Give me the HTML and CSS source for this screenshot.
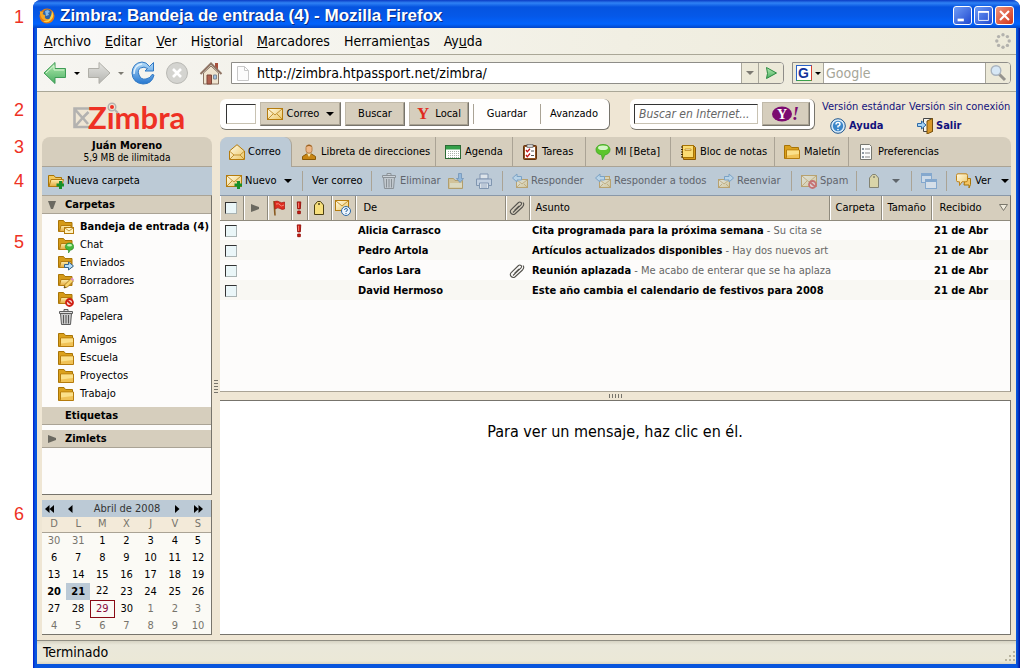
FILE: index.html
```html
<!DOCTYPE html>
<html lang="es">
<head>
<meta charset="utf-8">
<title>Zimbra: Bandeja de entrada (4)</title>
<link rel="stylesheet" href="styles.css">
</head>
<body>
<svg class="sprite" aria-hidden="true">
  <defs>
    <linearGradient id="gold" x1="0" y1="0" x2="0" y2="1"><stop offset="0" stop-color="#fdeeb0"/><stop offset="1" stop-color="#e3a93c"/></linearGradient>
    <linearGradient id="paper" x1="0" y1="0" x2="1" y2="1"><stop offset="0" stop-color="#fffbe8"/><stop offset="1" stop-color="#ecc766"/></linearGradient>
    <linearGradient id="green" x1="0" y1="0" x2="0" y2="1"><stop offset="0" stop-color="#b4ecb0"/><stop offset="1" stop-color="#4aae62"/></linearGradient>
    <linearGradient id="blue" x1="0" y1="0" x2="0" y2="1"><stop offset="0" stop-color="#b5dcf8"/><stop offset="1" stop-color="#2577d0"/></linearGradient>
    <linearGradient id="grey" x1="0" y1="0" x2="0" y2="1"><stop offset="0" stop-color="#e4e4e0"/><stop offset="1" stop-color="#b4b4b0"/></linearGradient>
  </defs>
  <symbol id="mail" viewBox="0 0 16 16"><rect x=".5" y="2.5" width="15" height="11" fill="url(#paper)" stroke="#b57b0d"/><path d="M1 3l7 6 7-6M1 13l5-5M15 13l-5-5" fill="none" stroke="#c39332"/></symbol>
  <symbol id="openmail" viewBox="0 0 16 16"><path d="M.5 7L8 .7 15.500 7v8.500H.5z" fill="url(#paper)" stroke="#b57b0d"/><path d="M1 7.500l4 3.500h6l4-3.500M1 15l4-4M15 15l-4-4" fill="none" stroke="#c39332"/></symbol>
  <symbol id="plus" viewBox="0 0 16 16"><path d="M11 8h3v2.500h2v3h-2V16h-3v-2.500H8.500v-3H11z" fill="#16902a"/></symbol>
  <symbol id="newmail" viewBox="0 0 16 16"><use href="#mail"/><use href="#plus"/></symbol>
  <symbol id="folder" viewBox="0 0 16 16"><path d="M.5 14.500v-13h5.500l1.500 2h7v11z" fill="#dba11d" stroke="#a87406"/><path d="M2.500 13.500V6h13v8.500H1z" fill="#f0c256" stroke="#b57b0d"/><path d="M3 6.500h12v3.500L3 11.500z" fill="#fbe08a"/></symbol>
  <symbol id="newfolder" viewBox="0 0 16 16"><path d="M.5 13.500v-11h5.500l1.500 2h6v9z" fill="#f3c95c" stroke="#a87406"/><path d="M1 13.500L3 6.500h12.500l-2 7z" fill="url(#gold)" stroke="#b57b0d"/><use href="#plus"/></symbol>
  <symbol id="minifolder" viewBox="0 0 16 16"><path d="M.5 12.500V1.500h5l1.500 2h7v9z" fill="#d59a18" stroke="#a87406"/><path d="M1.500 12.500l1.500-6h10v6z" fill="url(#gold)" stroke="#b57b0d"/></symbol>
  <symbol id="f-in" viewBox="0 0 16 16"><use href="#minifolder"/><rect x="6.500" y="8.500" width="9" height="6" fill="#fff3c4" stroke="#b57b0d"/><path d="M7 9l4 3 4-3" fill="none" stroke="#c39332"/></symbol>
  <symbol id="f-chat" viewBox="0 0 16 16"><use href="#minifolder"/><path d="M11.500 6c2.500 0 4.300 1.500 4.300 3.700 0 2-1.500 3.200-3.300 3.400L10.500 16v-3c-2-.3-3.200-1.500-3.200-3.300C7.300 7.500 9 6 11.500 6z" fill="#45b83c" stroke="#26882a" stroke-width=".6"/><ellipse cx="11.500" cy="8.300" rx="2.500" ry="1.200" fill="#c9f3b8"/></symbol>
  <symbol id="f-sent" viewBox="0 0 16 16"><use href="#minifolder"/><path d="M6.500 9.500h4V7l5 4-5 4v-2.500h-4z" fill="#b5dcf8" stroke="#35648d"/></symbol>
  <symbol id="f-draft" viewBox="0 0 16 16"><use href="#minifolder"/><path d="M6 15l1-3.500 6-6 2.500 2.500-6 6z" fill="#f9d36b" stroke="#9a6d13" stroke-width=".8"/><path d="M12.500 6l1.500-1.500 2 2L14.800 8z" fill="#dc8fc4"/><path d="M6 15l.6-2 1.400 1.400z" fill="#4a3a10"/></symbol>
  <symbol id="no" viewBox="0 0 16 16"><circle cx="11.500" cy="11.500" r="3.500" fill="#f6d2cc" stroke="#cf1d12" stroke-width="1.800"/><path d="M9.200 9.500l4.800 4" stroke="#cf1d12" stroke-width="1.700"/></symbol>
  <symbol id="f-spam" viewBox="0 0 16 16"><use href="#minifolder"/><use href="#no"/></symbol>
  <symbol id="spam" viewBox="0 0 16 16"><use href="#mail"/><use href="#no"/></symbol>
  <symbol id="trash" viewBox="0 0 16 16"><path d="M2.500 4.500h11l-1 11h-9z" fill="#c9c9c9" stroke="#5c5c5c"/><path d="M5.500 6v8.500M8 6v8.500M10.500 6v8.500" stroke="#555"/><path d="M1.500 2.500h13v2h-13zM6 2V.5h4V2" fill="#dedede" stroke="#5c5c5c"/></symbol>
  <symbol id="person" viewBox="0 0 16 16"><path d="M1.500 15.500v-3l4-2.500h5l4 2.500v3z" fill="#c98612" stroke="#8a5a08"/><path d="M6 9.500h4L8 13z" fill="#fbe9b4"/><rect x="5" y="1" width="6" height="8" rx="2.500" fill="#efb887" stroke="#b98048"/><path d="M5.500 3q2.500-2 5 0V2q-2.500-2.500-5 0z" fill="#9a6020"/></symbol>
  <symbol id="agenda" viewBox="0 0 16 16"><rect x=".5" y="1.500" width="15" height="13" fill="#fff" stroke="#2c6a35"/><path d="M1 2h14v3.500H1z" fill="#35a04a"/><path d="M3 7.500h11M3 9.500h11M3 11.500h11M3 13.500h11" stroke="#a9b3a9" stroke-dasharray="1 1"/></symbol>
  <symbol id="tasks" viewBox="0 0 16 16"><rect x="1.500" y="1.500" width="13" height="14" rx="1" fill="#91501d" stroke="#5e3210"/><path d="M3 3h10v11H3z" fill="#fff"/><rect x="5" y=".5" width="6" height="3" fill="#d0d0d0" stroke="#666" stroke-width=".7"/><path d="M4 6l1.300 1.800L8 4.800M4 11l1.300 1.800L8 9.500" fill="none" stroke="#c41414" stroke-width="1.300"/><path d="M9 7h3M9 11.500h3" stroke="#555"/></symbol>
  <symbol id="bubble" viewBox="0 0 16 16"><path d="M8 .5c4 0 7 2 7 5.200 0 3-2.500 4.800-5 5.100L7.500 15.800 6.500 10.800C3 10.300 1 8.500 1 5.700 1 2.500 4 .5 8 .5z" fill="#5cc52c" stroke="#3da424" stroke-width=".8"/><ellipse cx="8" cy="3.800" rx="5" ry="2.300" fill="#d5f5c8"/></symbol>
  <symbol id="notes" viewBox="0 0 16 16"><path d="M2.500 1.500h11l2 2v12h-12z" fill="#d59a18" stroke="#8a5a08"/><rect x="2.500" y="1.500" width="11" height="12" fill="#fbdc72" stroke="#a87406"/><path d="M5 5h6v1.500H5z" fill="#fff6cf" stroke="#b57b0d" stroke-width=".7"/><path d="M1 3h2M1 5.500h2M1 8h2M1 10.500h2M1 13h2" stroke="#3b2a08"/></symbol>
  <symbol id="prefs" viewBox="0 0 16 16"><path d="M2.500.5h9l2 2v13h-11z" fill="#fcfcfa" stroke="#77776f"/><path d="M7 5h5M7 9h5M7 13h5" stroke="#888"/><path d="M4 4h2v2H4zM4 8h2v2H4zM4 12h2v2H4z" fill="#8d98a2"/></symbol>
  <symbol id="move" viewBox="0 0 16 16"><path d="M.5 15.500v-10h5l1.500 2h7.500v8z" fill="#e6bd62" stroke="#a87406"/><path d="M2 10h12v4.500H2z" fill="#fbe9ae"/><path d="M10.500.5h3v5H15.500L12 9.500 8.500 5.500h2z" fill="#69a8e2" stroke="#2a609a" stroke-width=".8"/></symbol>
  <symbol id="print" viewBox="0 0 16 16"><path d="M4 1h8v5H4z" fill="#fff" stroke="#46638c"/><path d="M.5 6h15v6.500H.5z" fill="#c8d6ea" stroke="#46638c"/><path d="M3.500 10h9v5.500h-9z" fill="#fff" stroke="#46638c"/><path d="M5 12h6M5 14h6" stroke="#7a92b4"/></symbol>
  <symbol id="reply" viewBox="0 0 16 16"><rect x="4.500" y="6.500" width="11" height="8" fill="url(#paper)" stroke="#b57b0d"/><path d="M5 7l5 4 5-4M5 14l3-3M15 14l-3-3" fill="none" stroke="#c39332"/><path d="M.5 5L5 1v2.500h4.500v3.500H5V9z" fill="#b5dcf8" stroke="#3c7db5"/></symbol>
  <symbol id="replyall" viewBox="0 0 16 16"><rect x="5.500" y="3.500" width="9" height="7" fill="#f4dc96" stroke="#b57b0d"/><use href="#reply"/></symbol>
  <symbol id="forward" viewBox="0 0 16 16"><rect x=".5" y="6.500" width="11" height="8" fill="url(#paper)" stroke="#b57b0d"/><path d="M1 7l5 4 5-4M1 14l3-3M11 14l-3-3" fill="none" stroke="#c39332"/><path d="M15.500 5L11 1v2.500H6.500v3.500H11V9z" fill="#b5dcf8" stroke="#3c7db5"/></symbol>
  <symbol id="tag" viewBox="0 0 16 16"><path d="M3.500 14.500V5l3-3.500h3l3 3.500v9.500z" fill="#f7df7b" stroke="#4c3f10"/><circle cx="8" cy="4" r="1" fill="#4c3f10"/></symbol>
  <symbol id="windows" viewBox="0 0 16 16"><rect x=".5" y=".5" width="10" height="9" fill="#dcebfa" stroke="#4d87c8"/><path d="M1 2h9" stroke="#4d87c8" stroke-width="2"/><rect x="4.500" y="6.500" width="11" height="9" fill="#eef5fc" stroke="#4d87c8"/><path d="M5 8h10" stroke="#4d87c8" stroke-width="2"/></symbol>
  <symbol id="view" viewBox="0 0 16 16"><path d="M9 5.500h5.500v6L13 15v-3H8z" fill="#f4c563" stroke="#a87406"/><path d="M2 .8h8q1.500 0 1.500 1.500v5q0 1.500-1.500 1.500H6L3.500 12.500V8.800H2Q.5 8.800.5 7.300v-5Q.5.8 2 .8z" fill="url(#paper)" stroke="#c0841a"/></symbol>
  <symbol id="flag" viewBox="0 0 16 16"><path d="M3 1l1 14.500" stroke="#8a5a20" stroke-width="1.600"/><path d="M3.500 1.500q3-1 5 .5t5 0v7q-2.500 1-4.500-.5T4 9z" fill="#df2d20" stroke="#a81410" stroke-width=".7"/><path d="M5 4q3-1 4 1t4 0" stroke="#f58a7c" fill="none"/></symbol>
  <symbol id="urgent" viewBox="0 0 6 16"><path d="M1 1h4L4.500 9h-3zM1.500 11.500h3v3h-3z" fill="#d52015" stroke="#8f0d08"/><path d="M2.500 2v6" stroke="#f58a7c"/></symbol>
  <symbol id="status" viewBox="0 0 16 16"><rect x=".5" y=".5" width="13" height="10" fill="url(#paper)" stroke="#b57b0d"/><path d="M1 1l6 5 6-5" fill="none" stroke="#c39332"/><circle cx="11" cy="11" r="4.500" fill="#eef5fc" stroke="#2d69a5"/><path d="M9.500 10q0-1.500 1.500-1.500t1.500 1.300-1.500 1.400v.8M11 13v1" fill="none" stroke="#2d69a5"/></symbol>
  <symbol id="clip" viewBox="0 0 16 16"><path d="M4 12.500L12 5q1.200-1.500 0-2.500t-2.500 0L2.200 9.500q-1.800 2.200 0 4t4 .2L13.500 7q2.200-2.500.5-4.500M5.500 10.500l4.500-4.500" fill="none" stroke="#55534e" stroke-width="1.100"/></symbol>
  <symbol id="help" viewBox="0 0 16 16"><circle cx="8" cy="8" r="7.300" fill="#d9ebf9" stroke="#1d548c"/><circle cx="8" cy="8" r="5.200" fill="#3b86c9"/><path d="M6 6.500q0-2 2-2t2 1.700-2 2v1.300M8 11v1.300" fill="none" stroke="#fff" stroke-width="1.500"/></symbol>
  <symbol id="exit" viewBox="0 0 16 16"><path d="M6.500.5h9v13h-9z" fill="#f4f4f0" stroke="#444"/><path d="M15.500.5v13L10 16V3z" fill="#d9982a" stroke="#76500d"/><path d="M.5 5.500h4V3l4.500 4-4.500 4V8.500h-4z" fill="#a8d4f5" stroke="#2d69a5"/></symbol>
  <symbol id="firefox" viewBox="0 0 16 16"><circle cx="8" cy="8" r="7.500" fill="#e47a12"/><circle cx="8.500" cy="6.500" r="5" fill="#2f62a8"/><path d="M6 3l3-1 2 2-2 1 1 2-3 1z" fill="#84b9e8"/><path d="M.8 3Q2 4 4.500 4l-1 2 3 1.500Q5 9 6.500 10.500t5 .2Q9 14 5 12T.8 3z" fill="#f7a823"/><path d="M13 3q3 5-1 9t-8 1q8 1 9-10z" fill="#fbd34a"/></symbol>
  <symbol id="throbber" viewBox="0 0 16 16"><g fill="#b3b2ad"><circle cx="8" cy="1.800" r="1.700"/><circle cx="12.400" cy="3.600" r="1.700"/><circle cx="14.200" cy="8" r="1.700"/><circle cx="12.400" cy="12.400" r="1.700"/><circle cx="8" cy="14.200" r="1.700"/><circle cx="3.600" cy="12.400" r="1.700"/><circle cx="1.800" cy="8" r="1.700"/><circle cx="3.600" cy="3.600" r="1.700"/></g></symbol>
</svg>

<ol class="callouts"><li>1</li><li>2</li><li>3</li><li>4</li><li>5</li><li>6</li></ol>

<div class="window">
  <header class="titlebar">
    <svg class="icon"><use href="#firefox"/></svg>
    <h1>Zimbra: Bandeja de entrada (4) - Mozilla Firefox</h1>
    <button class="winbtn" aria-label="Minimizar"><svg viewBox="0 0 19 19"><path d="M4 13h7v3H4z" fill="#fff"/></svg></button>
    <button class="winbtn" aria-label="Maximizar"><svg viewBox="0 0 19 19"><path d="M4 5h11v10H4z" fill="none" stroke="#fff"/><path d="M3.500 4.500h12v2h-12z" fill="#fff"/></svg></button>
    <button class="winbtn close" aria-label="Cerrar"><svg viewBox="0 0 19 19"><path d="M4.500 4.500l10 10M14.500 4.500l-10 10" stroke="#fff" stroke-width="2.400"/></svg></button>
  </header>

  <nav class="menubar">
    <a href="#"><u>A</u>rchivo</a><a href="#"><u>E</u>ditar</a><a href="#"><u>V</u>er</a><a href="#">Hi<u>s</u>torial</a><a href="#"><u>M</u>arcadores</a><a href="#">Herramien<u>t</u>as</a><a href="#">Ay<u>u</u>da</a>
    <svg class="icon throbber"><use href="#throbber"/></svg>
  </nav>

  <div class="navbar">
    <button aria-label="Atrás"><svg width="24" height="24" viewBox="0 0 24 24"><path d="M1 12L12 1.500V7.500h10.500v9H12v6z" fill="url(#green)" stroke="#3f9c56"/><path d="M3 12l8-7.500V9h10" fill="none" stroke="#d8f5d2"/></svg></button>
    <span class="caret small"></span>
    <button aria-label="Adelante"><svg width="24" height="24" viewBox="0 0 24 24"><path d="M23 12L12 1.500V7.500H1.500v9H12v6z" fill="url(#grey)" stroke="#b0afa8"/></svg></button>
    <span class="caret small faded"></span>
    <button aria-label="Recargar"><svg width="24" height="24" viewBox="0 0 24 24"><path d="M18.500 5.500L22.500 1.500V10h-8.500l2.500-2.500Q13 5 9.500 7T8 14t7 4 6-4.500l2 .5Q21 23 12 23 1.500 22 1 12 1.500 2 11 1q4.500 0 7.500 4.500z" fill="url(#blue)" stroke="#2f78c4"/><path d="M3 13Q3 4 11 3" fill="none" stroke="#dff0fd" stroke-width="1.500"/></svg></button>
    <button class="apart" aria-label="Detener"><svg width="24" height="24" viewBox="0 0 24 24"><circle cx="12" cy="12" r="10.500" fill="#d4d4d0" stroke="#b9b9b4"/><path d="M8 8l8 8M16 8l-8 8" stroke="#fff" stroke-width="2.600"/></svg></button>
    <button class="apart" aria-label="Inicio"><svg width="24" height="24" viewBox="0 0 24 24"><path d="M4.500 12v11h15V12L12 5z" fill="#efe4cf" stroke="#8a7462"/><path d="M16 2h3v6h-3z" fill="#a84f3b"/><path d="M1.500 13L12 2.500 22.500 13" fill="none" stroke="#8f7464" stroke-width="2"/><path d="M8 14h4.500v9H8z" fill="#b0604e" stroke="#7c4537"/><path d="M14.500 14h3v4h-3z" fill="#9fc0de" stroke="#7c8894"/></svg></button>
    <div class="address">
      <svg width="12" height="15" viewBox="0 0 12 15"><path d="M.5.5h7l4 4v10H.5zM7.500.5v4h4" fill="#fcfcfc" stroke="#c8c8c8"/></svg>
      <input type="text" aria-label="Dirección" value="http://zimbra.htpassport.net/zimbra/">
      <button class="drop" aria-label="Historial de direcciones"><span class="caret grey"></span></button>
      <button class="go" aria-label="Ir"><svg width="14" height="14" viewBox="0 0 14 14"><path d="M2.500 1.500L12.500 7l-10 5.500 1-5z" fill="url(#green)" stroke="#2a8a40"/></svg></button>
    </div>
    <div class="google">
      <button class="engine" aria-label="Motor de búsqueda"><span class="glogo">G</span><span class="caret small"></span></button>
      <input type="text" aria-label="Buscar con Google" placeholder="Google">
      <button class="go" aria-label="Buscar"><svg width="18" height="18" viewBox="0 0 18 18"><path d="M10 10l6 6" stroke="#96948f" stroke-width="3"/><circle cx="7" cy="6.500" r="4.800" fill="#d7e8f6" stroke="#a9b4bf" stroke-width="1.400"/></svg></button>
    </div>
  </div>

  <main class="app">
    <aside class="side">
      <div class="logo">
        <svg width="120" height="36" viewBox="0 0 120 36" role="img" aria-label="Zimbra">
          <path d="M19 9.500H2.500v18.500H18M3.500 11l7 8-7 8M10.500 19l6-6M10 18l6 7" fill="none" stroke="#b3b2b0" stroke-width="2.600"/>
          <text x="16" y="30" class="logotext">Zimbra</text>
          <circle cx="40" cy="8" r="3.800" fill="#efe6d4" stroke="#b3b2b0" stroke-width="1.500"/><path d="M43 11l3 3" stroke="#b3b2b0" stroke-width="2"/><circle cx="40" cy="8" r="2" fill="#ee3124"/>
        </svg>
      </div>
      <div class="user"><b>Juán Moreno</b><span>5,9 MB de ilimitada</span></div>
      <button class="newfolder"><svg class="icon"><use href="#newfolder"/></svg>Nueva carpeta</button>
      <div class="tree">
        <h2><svg class="tw" viewBox="0 0 8 8"><path d="M0 0h8L5 8H3z" fill="#6b6960"/></svg>Carpetas</h2>
        <ul>
          <li class="unread"><svg class="icon"><use href="#f-in"/></svg>Bandeja de entrada (4)</li>
          <li><svg class="icon"><use href="#f-chat"/></svg>Chat</li>
          <li><svg class="icon"><use href="#f-sent"/></svg>Enviados</li>
          <li><svg class="icon"><use href="#f-draft"/></svg>Borradores</li>
          <li><svg class="icon"><use href="#f-spam"/></svg>Spam</li>
          <li><svg class="icon"><use href="#trash"/></svg>Papelera</li>
        </ul>
        <ul class="own">
          <li><svg class="icon"><use href="#folder"/></svg>Amigos</li>
          <li><svg class="icon"><use href="#folder"/></svg>Escuela</li>
          <li><svg class="icon"><use href="#folder"/></svg>Proyectos</li>
          <li><svg class="icon"><use href="#folder"/></svg>Trabajo</li>
        </ul>
        <h2>Etiquetas</h2>
        <h2 class="zimlets"><svg class="tw" viewBox="0 0 8 8"><path d="M0 0l8 3v2L0 8z" fill="#6b6960"/></svg>Zimlets</h2>
      </div>
      <div class="calendar">
        <div class="month">
          <button aria-label="Año anterior"><svg width="9" height="8" viewBox="0 0 9 8"><path d="M4.500 0v8L0 4zM9 0v8L4.500 4z"/></svg></button>
          <button aria-label="Mes anterior"><svg width="5" height="8" viewBox="0 0 5 8"><path d="M4.500 0v8L0 4z"/></svg></button>
          <span>Abril de 2008</span>
          <button aria-label="Mes siguiente"><svg width="5" height="8" viewBox="0 0 5 8"><path d="M0 0v8l4.500-4z"/></svg></button>
          <button aria-label="Año siguiente"><svg width="9" height="8" viewBox="0 0 9 8"><path d="M0 0v8l4.500-4zM4.500 0v8L9 4z"/></svg></button>
        </div>
        <table>
          <thead><tr><th>D</th><th>L</th><th>M</th><th>X</th><th>J</th><th>V</th><th>S</th></tr></thead>
          <tbody>
            <tr><td class="off">30</td><td class="off">31</td><td>1</td><td>2</td><td>3</td><td>4</td><td>5</td></tr>
            <tr><td>6</td><td>7</td><td>8</td><td>9</td><td>10</td><td>11</td><td>12</td></tr>
            <tr><td>13</td><td>14</td><td>15</td><td>16</td><td>17</td><td>18</td><td>19</td></tr>
            <tr><td class="busy">20</td><td class="busy picked">21</td><td>22</td><td>23</td><td>24</td><td>25</td><td>26</td></tr>
            <tr><td>27</td><td>28</td><td class="today">29</td><td>30</td><td class="off">1</td><td class="off">2</td><td class="off">3</td></tr>
            <tr><td class="off">4</td><td class="off">5</td><td class="off">6</td><td class="off">7</td><td class="off">8</td><td class="off">9</td><td class="off">10</td></tr>
          </tbody>
        </table>
      </div>
    </aside>

    <div class="sash" aria-hidden="true"><i></i><i></i><i></i><i></i><i></i></div>

    <section class="content">
      <div class="top">
        <form class="search">
          <input class="query" type="text" aria-label="Buscar">
          <button type="button" class="raised kind"><svg class="icon"><use href="#mail"/></svg>Correo<span class="caret"></span></button>
          <button type="button" class="raised find">Buscar</button>
          <button type="button" class="raised local"><span class="ylogo">Y</span>Local</button>
          <span class="sep"></span>
          <button type="button" class="flat">Guardar</button>
          <span class="sep"></span>
          <button type="button" class="flat">Avanzado</button>
        </form>
        <form class="websearch">
          <input type="text" aria-label="Buscar en Internet" placeholder="Buscar en Internet...">
          <button type="button" class="raised yahoo" aria-label="Yahoo"><svg width="28" height="18" viewBox="0 0 28 18"><ellipse cx="10" cy="9" rx="10" ry="7.500" fill="#7b0a70"/><text x="5" y="14" class="yy">Y</text><text x="20" y="15" class="bang">!</text></svg></button>
        </form>
        <div class="links">
          <a href="#">Versión estándar</a><a href="#">Versión sin conexión</a>
          <a href="#" class="strong"><svg class="icon"><use href="#help"/></svg>Ayuda</a><a href="#" class="strong"><svg class="icon"><use href="#exit"/></svg>Salir</a>
        </div>
      </div>

      <nav class="tabs">
        <button class="current"><svg class="icon"><use href="#openmail"/></svg>Correo</button>
        <button><svg class="icon"><use href="#person"/></svg>Libreta de direcciones</button>
        <button><svg class="icon"><use href="#agenda"/></svg>Agenda</button>
        <button><svg class="icon"><use href="#tasks"/></svg>Tareas</button>
        <button><svg class="icon"><use href="#bubble"/></svg>MI [Beta]</button>
        <button><svg class="icon"><use href="#notes"/></svg>Bloc de notas</button>
        <button><svg class="icon"><use href="#folder"/></svg>Maletín</button>
        <button><svg class="icon"><use href="#prefs"/></svg>Preferencias</button>
      </nav>

      <div class="toolbar">
        <button><svg class="icon"><use href="#newmail"/></svg>Nuevo<span class="caret"></span></button>
        <button class="ruled">Ver correo</button>
        <button class="ruled" disabled><svg class="icon"><use href="#trash"/></svg>Eliminar</button>
        <button disabled aria-label="Mover"><svg class="icon"><use href="#move"/></svg></button>
        <button disabled aria-label="Imprimir"><svg class="icon"><use href="#print"/></svg></button>
        <button class="ruled" disabled><svg class="icon"><use href="#reply"/></svg>Responder</button>
        <button disabled><svg class="icon"><use href="#replyall"/></svg>Responder a todos</button>
        <button disabled><svg class="icon"><use href="#forward"/></svg>Reenviar</button>
        <button class="ruled" disabled><svg class="icon"><use href="#spam"/></svg>Spam</button>
        <button class="ruled" disabled aria-label="Etiquetar"><svg class="icon"><use href="#tag"/></svg><span class="caret wide"></span></button>
        <button class="ruled" disabled aria-label="Separar"><svg class="icon"><use href="#windows"/></svg></button>
        <button class="ruled"><svg class="icon"><use href="#view"/></svg>Ver<span class="caret wide"></span></button>
      </div>

      <div class="list">
        <table>
          <colgroup><col class="cbox"><col class="c24"><col class="c24"><col class="c16"><col class="c24"><col class="c24"><col class="cfrom"><col class="c24"><col><col class="cfolder"><col class="csize"><col class="cdate"></colgroup>
          <thead><tr>
            <th><input type="checkbox" aria-label="Seleccionar todo"></th>
            <th><svg class="tw" viewBox="0 0 8 8"><path d="M0 0l8 3v2L0 8z" fill="#6b6960"/></svg></th>
            <th><svg class="icon"><use href="#flag"/></svg></th>
            <th><svg class="bangicon"><use href="#urgent"/></svg></th>
            <th><svg class="icon"><use href="#tag"/></svg></th>
            <th><svg class="icon"><use href="#status"/></svg></th>
            <th class="text from">De</th>
            <th><svg class="icon"><use href="#clip"/></svg></th>
            <th class="text">Asunto</th>
            <th class="text">Carpeta</th>
            <th class="text">Tamaño</th>
            <th class="text date">Recibido<svg width="9" height="7" viewBox="0 0 9 7"><path d="M.5.500h8L4.500 6.500z" fill="#f0ebdd" stroke="#7a776c"/></svg></th>
          </tr></thead>
          <tbody>
            <tr><td><input type="checkbox" aria-label="Alicia Carrasco"></td><td></td><td></td><td><svg class="bangicon"><use href="#urgent"/></svg></td><td></td><td></td><td class="from">Alicia Carrasco</td><td></td><td class="subject">Cita programada para la próxima semana<span> - Su cita se</span></td><td></td><td></td><td class="date">21 de Abr</td></tr>
            <tr><td><input type="checkbox" aria-label="Pedro Artola"></td><td></td><td></td><td></td><td></td><td></td><td class="from">Pedro Artola</td><td></td><td class="subject">Artículos actualizados disponibles<span> - Hay dos nuevos art</span></td><td></td><td></td><td class="date">21 de Abr</td></tr>
            <tr><td><input type="checkbox" aria-label="Carlos Lara"></td><td></td><td></td><td></td><td></td><td></td><td class="from">Carlos Lara</td><td><svg class="icon"><use href="#clip"/></svg></td><td class="subject">Reunión aplazada<span> - Me acabo de enterar que se ha aplaza</span></td><td></td><td></td><td class="date">21 de Abr</td></tr>
            <tr><td><input type="checkbox" aria-label="David Hermoso"></td><td></td><td></td><td></td><td></td><td></td><td class="from">David Hermoso</td><td></td><td class="subject">Este año cambia el calendario de festivos para 2008</td><td></td><td></td><td class="date">21 de Abr</td></tr>
          </tbody>
        </table>
      </div>
      <div class="sash flat-sash" aria-hidden="true"><i></i><i></i><i></i><i></i><i></i></div>
      <article class="preview">Para ver un mensaje, haz clic en él.</article>
    </section>
  </main>

  <footer class="status"><span>Terminado</span><svg width="12" height="12" viewBox="0 0 12 12"><path d="M9 1h2v2H9zM5 5h2v2H5zM9 5h2v2H9zM1 9h2v2H1zM5 9h2v2H5zM9 9h2v2H9z" fill="#b8b49f"/></svg></footer>
</div>
</body>
</html>
```
FILE: styles.css
```css
* { box-sizing: border-box; }
body {
  margin: 0;
  min-height: 100vh;
  display: grid;
  grid-template-columns: 33px 1fr;
  background: #fff;
  color: #000;
  font: 11px/14px "DejaVu Sans Condensed", "DejaVu Sans", sans-serif;
}
button, input { font: inherit; color: inherit; }
button { display: flex; align-items: center; border: 0; padding: 0; background: none; white-space: nowrap; }
ul, ol, h1, h2 { margin: 0; padding: 0; list-style: none; font-size: inherit; }
a { color: inherit; text-decoration: none; }
svg { display: block; flex: none; }
.sprite { position: absolute; width: 0; height: 0; }
.icon { width: 16px; height: 16px; }
.tw { width: 8px; height: 8px; }
.caret { border: 4px solid transparent; border-top-color: #000; border-bottom: 0; }
.caret.small { border-width: 3px 3px 0; }
.caret.faded, .caret.grey { border-top-color: #7c7a72; }

.callouts {
  display: grid;
  grid-template-rows: 93px 37px 34px 61px 272px auto;
  padding: 7px 0 0 14px;
  font: 18px/20px "Liberation Sans", sans-serif;
  color: #ee3124;
}

.window {
  display: flex;
  flex-direction: column;
  min-width: 0;
  padding: 0 4px 4px;
  border-radius: 8px 8px 0 0;
  background: linear-gradient(90deg, #0019cf, #0855dd 2px, #0855dd calc(100% - 3px), #00109c);
}
.titlebar {
  display: flex;
  align-items: center;
  height: 28px;
  margin: 0 -4px;
  padding: 3px 6px 0;
  border-radius: 8px 8px 0 0;
  background: linear-gradient(#0a3bc4, #2f82f5 3px, #0554e0 7px, #0558e8 16px, #0263fc 24px, #0245c8);
}
.titlebar h1 {
  flex: 1;
  padding-left: 5px;
  font: bold 17px/20px "Liberation Sans", sans-serif;
  color: #fff;
  text-shadow: 1px 1px #0a2a80;
}
.winbtn { width: 19px; height: 19px; margin-left: 2px; border: 1px solid #fff; border-radius: 3px; background: linear-gradient(135deg, #6f9cf5, #1f49d0); }
.winbtn.close { background: linear-gradient(135deg, #f0947a, #d0341a); }

.menubar {
  display: flex;
  align-items: center;
  gap: 14px;
  height: 27px;
  padding: 0 5px 0 7px;
  border-bottom: 1px solid #aaa797;
  background: linear-gradient(90deg, #fafaf9, #f1efe3 60%, #edead9);
  font-size: 14px;
}
.throbber { margin-left: auto; }

.navbar {
  display: flex;
  align-items: center;
  gap: 6px;
  height: 37px;
  padding: 0 5px 0 6px;
  border-bottom: 1px solid #aaa797;
  background: linear-gradient(90deg, #f6f5f1, #efede1 60%, #edead9);
}
.navbar button { flex: none; }
.navbar button + .caret { margin: 0 1px; }
.navbar .apart { margin-left: 4px; }
.navbar input { flex: 1; min-width: 0; height: 20px; padding: 0 8px; border: 0; background: none; font-size: 14px; outline: 0; }
.address, .google { display: flex; align-items: center; height: 22px; border: 1px solid #8e8d88; background: #fff; overflow: hidden; }
.address { flex: 1; min-width: 0; margin-left: 2px; padding-left: 5px; border-radius: 0 4px 4px 0; }
.google { width: 219px; margin-left: 2px; border-radius: 0 4px 4px 0; }
.google input { padding: 0 2px; }
.google input::placeholder { color: #a6a698; opacity: 1; }
.drop, .go, .engine { height: 20px; justify-content: center; background: #ece9d8; }
.drop, .go { border-left: 1px solid #a9a79b; }
.drop { width: 17px; }
.go { width: 25px; }
.engine { width: 31px; gap: 3px; border-right: 1px solid #a9a79b; }
.glogo { width: 16px; height: 16px; border: 1px solid #2a62c8; border-color: #2a62c8 #d6402e #3aa04a #2a62c8; background: #fff; color: #12339a; font: bold 14px/14px "Liberation Sans", sans-serif; text-align: center; }

.app {
  flex: 1;
  display: grid;
  grid-template-columns: 170px 8px 1fr;
  padding: 0 5px 5px;
  background: #efe6d4;
}
.side { display: flex; flex-direction: column; }
.logo { height: 45px; padding: 7px 0 0 30px; }
.logotext { font: bold 31px Lato, sans-serif; fill: #ee3124; }
.user { display: flex; flex-direction: column; align-items: center; height: 30px; padding-top: 3px; border-bottom: 1px solid #aaa395; border-radius: 8px 8px 0 0; background: #d6cebd; line-height: 12px; }
.user span { font-size: 10px; }
.newfolder { gap: 3px; height: 28px; padding-left: 6px; background: #bccad6; }
.tree { flex: 1; border: 1px solid #77746c; border-width: 1px 1px 1px 0; border-top-color: #aaa395; background: #fdfcfb; }
.tree h2 { display: flex; align-items: center; gap: 9px; height: 18px; padding-left: 6px; border-bottom: 1px solid #aaa395; background: #d6cebd; }
.tree h2:not(:has(svg)) { padding-left: 23px; }
.tree .zimlets { margin-top: 5px; }
.tree ul { padding: 4px 0 0 16px; }
.tree li { display: flex; align-items: center; gap: 6px; height: 18px; white-space: nowrap; }
.tree .own { padding: 5px 0 4px 16px; }
.unread { font-weight: bold; }

.calendar { margin-top: 5px; border: 1px solid #77746c; border-width: 0 1px 1px 0; background: #fbfaf5; }
.month { display: flex; align-items: center; gap: 14px; height: 17px; padding: 0 8px 0 3px; background: #bccad6; }
.month span { flex: 1; padding-left: 6px; text-align: center; color: #333; white-space: nowrap; }
.calendar table { width: 100%; border-collapse: collapse; table-layout: fixed; text-align: center; }
.calendar th { height: 15px; padding: 0; background: #f3ead9; border-bottom: 1px solid #aaa395; color: #77746c; font-weight: normal; }
.calendar td { height: 17px; padding: 0; }
.calendar th:last-child, .calendar td:last-child { padding-right: 2px; }
.off { color: #77746c; }
.busy { font-weight: bold; }
.picked { background: #bccad6; }
.today { border: 1px solid #8a0a14; color: #8a0a3c; }

.sash { display: flex; flex-direction: column; align-items: center; gap: 2px; padding: 288px 0 0 0; }
.sash i { width: 4px; height: 1px; background: #77746c; }
.flat-sash { flex-direction: row; justify-content: center; height: 8px; padding: 0; }
.flat-sash i { width: 1px; height: 4px; }

.content { display: flex; flex-direction: column; min-width: 0; }
.top { display: flex; align-items: flex-start; height: 45px; padding-top: 7px; }
.search, .websearch { display: flex; flex: none; align-items: center; height: 31px; padding: 0 6px; border-radius: 6px; border: 1px solid #77746c; border-width: 0 1px 1px 0; background: #fffefd; }
.search { width: 390px; gap: 4px; }
.websearch { width: 185px; gap: 4px; margin: 0 7px 0 20px; padding: 0 4px; }
.search input, .websearch input { height: 20px; border: 1px solid #c8c2b2; border-top-color: #333; border-left-color: #333; background: #fff; }
.query { width: 30px; }
.websearch input { flex: 1; min-width: 0; padding: 0 4px; font-size: 12px; font-style: italic; }
.websearch input::placeholder { color: #666; opacity: 1; }
.raised { justify-content: center; height: 24px; border: 1px solid #77746c; border-top-color: #c0b9a9; border-left-color: #c0b9a9; background: #d6cebd; box-shadow: inset -1px -1px #a9a292; }
.kind { width: 81px; gap: 4px; }
.kind .caret { margin-left: 3px; }
.find, .local { width: 60px; }
.local { gap: 6px; }
.ylogo { color: #e02a20; font: bold 17px/16px "Liberation Serif", serif; }
.yahoo { width: 48px; }
.yy { font: bold 14px "Liberation Serif", serif; fill: #fff; }
.bang { font: italic bold 18px "Liberation Serif", serif; fill: #7b0a70; }
.sep { width: 1px; height: 20px; background: #aaa395; }
.flat { flex: 1; justify-content: center; }
.links { flex: 1; display: grid; grid-template-columns: 87px 1fr; row-gap: 4px; padding-top: 1px; color: #12127c; white-space: nowrap; }
.links .strong { display: flex; align-items: center; gap: 3px; padding-left: 8px; font-weight: bold; }

.tabs { display: grid; grid-template-columns: 72px 144px 77px 73px 85px 104px 74px 1fr; height: 30px; border-radius: 8px 8px 0 0; background: #d6cebd; }
.tabs button { gap: 4px; padding-left: 9px; border-right: 1px solid #aaa395; border-bottom: 1px solid #aaa395; }
.tabs button:last-child { border-right: 0; }
.tabs .current { gap: 3px; border-bottom: 0; border-radius: 8px 8px 0 0; background: #bccad6; }

.toolbar { display: grid; grid-template-columns: 82px 69px 71px 28px 32px 87px 123px 79px 65px 55px 35px 1fr; align-items: center; height: 28px; background: #bccad6; }
.toolbar button { gap: 3px; height: 20px; padding-left: 6px; }
.toolbar .ruled { padding-left: 9px; border-left: 1px solid #aaa395; }
.toolbar .caret { margin-left: 4px; }
.toolbar .wide { margin-left: 7px; }
.toolbar button:disabled { color: #5f646c; }
.toolbar button:disabled .icon, .toolbar button:disabled .caret { opacity: .5; }

.list { flex: 1; min-height: 197px; border: 1px solid #77746c; border-width: 1px 1px 1px 0; border-color: #8a98a8 #77746c #aaa395; background: #fdfcfb; }
.list table { width: 100%; border-collapse: collapse; table-layout: fixed; }
.cbox { width: 23px; }
.c24 { width: 24px; }
.c16 { width: 16px; }
.cfrom { width: 150px; }
.cfolder { width: 52px; }
.csize { width: 50px; }
.cdate { width: 79px; }
.list th { height: 24px; padding: 0; border-right: 1px solid #8f8a7d; border-bottom: 1px solid #8f8a7d; background: #d6cebd; box-shadow: inset 1px 0 #fff; font-weight: normal; }
.list th:last-child { border-right: 0; }
.list .text { padding-left: 6px; text-align: left; }
.list td { height: 20px; padding: 1px 0 0; font-weight: bold; white-space: nowrap; }
.list th svg, .list td svg { margin: 0 auto; }
.list th.from, .list th.date { padding-left: 8px; }
.list td.from, .list td.date, .list .subject { padding-left: 3px; }
.list .date svg { float: right; margin: 3px 2px 0 0; }
.subject span { color: #666; font-weight: normal; }
.list tbody tr:nth-child(even) { background: #f9f8f3; }
.bangicon { width: 6px; height: 14px; }
input[type="checkbox"] { display: block; appearance: none; width: 12px; height: 12px; margin: 0 5px; border: 1px solid #a9b3b3; border-top-color: #333; border-left-color: #333; background: #eaf6f8; }

.preview { min-height: 235px; padding-top: 20px; border: 1px solid #77746c; border-left: 0; background: #fff; font-size: 16px; line-height: 22px; text-align: center; }

.status { display: flex; align-items: center; justify-content: space-between; height: 24px; padding: 0 0 2px 6px; border-top: 1px solid #8f8d82; background: linear-gradient(#d6d3c3, #eae8da 4px, #ebe8d7 20px, #dad6c4); font-size: 14px; }
.status svg { align-self: flex-end; }
```
